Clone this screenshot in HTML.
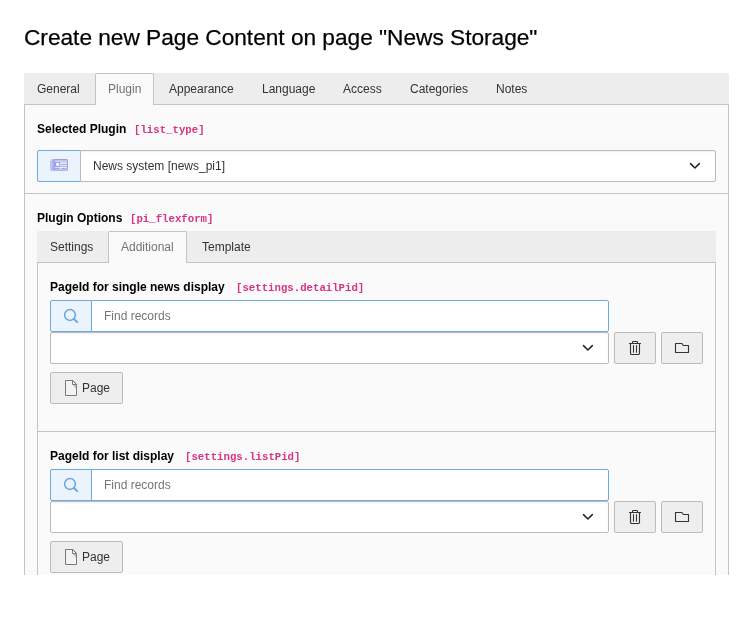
<!DOCTYPE html>
<html><head><meta charset="utf-8">
<style>
*{box-sizing:border-box;margin:0;padding:0}
html,body{width:753px;height:640px;background:#fff;overflow:hidden}
body{font-family:"Liberation Sans",sans-serif;font-size:12px;color:#333;position:relative}
div,span{position:absolute}
span.i{position:static}
h1,.tab,.lbl,.code,.txt{will-change:transform}
h1{position:absolute;left:24px;top:21.5px;font-size:22.7px;letter-spacing:-0.02px;font-weight:normal;color:#000;white-space:nowrap;line-height:30px;-webkit-text-stroke:0.25px #000}
.tabbar{background:#ededed;border-radius:2px 2px 0 0}
.tabline{height:1px;background:#c3c3c3}
.tab{top:0;height:31px;line-height:33px;color:#333;white-space:nowrap}
.tab.act{background:#fafafa;border:1px solid #c3c3c3;border-bottom:none;border-radius:2px 2px 0 0;color:#737373;height:32px;line-height:30px}
.panel{background:#fafafa;border:1px solid #c3c3c3;border-top:none;border-bottom:none}
.lbl{font-weight:bold;color:#000;white-space:nowrap;font-size:12px;line-height:14px}
.code{font-family:"Liberation Mono",monospace;color:#d63384;font-size:10.7px;font-weight:bold;white-space:nowrap;line-height:14px}
.hr{height:1px;background:#c3c3c3}
.fc{background:#fff;border:1px solid #bbb;border-radius:2px}
.sel{box-shadow:inset 0 1px 2px rgba(0,0,0,.06)}
.btn{background:#eee;border:1px solid #bbb;border-radius:2px}
.addon{background:#ebf3fc;border:1px solid #6daae0;border-radius:2px 0 0 2px}
.txt{white-space:nowrap;line-height:14px}
</style></head><body>
<h1>Create new Page Content on page "News Storage"</h1>

<!-- outer tabs -->
<div class="tabbar" style="left:24px;top:73px;width:705px;height:31px"></div>
<div class="tabline" style="left:24px;top:104px;width:705px"></div>
<div class="panel" style="left:24px;top:105px;width:705px;height:470px"></div>
<div class="tab" style="left:37px;top:73px">General</div>
<div class="tab act" style="left:95px;top:73px;width:59px;padding-left:12px">Plugin</div>
<div class="tab" style="left:169px;top:73px">Appearance</div>
<div class="tab" style="left:262px;top:73px">Language</div>
<div class="tab" style="left:343px;top:73px">Access</div>
<div class="tab" style="left:410px;top:73px">Categories</div>
<div class="tab" style="left:496px;top:73px">Notes</div>

<!-- selected plugin -->
<div class="lbl" style="left:37px;top:122px">Selected Plugin</div>
<div class="code" style="left:134px;top:123px">[list_type]</div>
<div class="addon" style="left:37px;top:150px;width:44px;height:32px"></div>
<div class="fc sel" style="left:80px;top:150px;width:636px;height:32px;border-radius:0 2px 2px 0"></div>
<svg style="position:absolute;left:47px;top:155px" width="24" height="19" viewBox="0 0 24 19">
  <path d="M3.2 6.2 L5.2 4.1 L7.6 4.1 L7.6 15.8 L4.2 15.8 Q3.2 15.8 3.2 14.8 Z" fill="#b3b7ee"/>
  <path d="M4.6 6.5 L4.6 14.5" stroke="#c7caf3" stroke-width="0.8"/>
  <rect x="7.25" y="4.75" width="13" height="10.4" rx="0.9" fill="#eef1fc" stroke="#979ce4" stroke-width="1.3"/>
  <rect x="8.6" y="7.2" width="4.2" height="4.4" fill="#f3f4fd" stroke="#979ce4" stroke-width="1.2"/>
  <rect x="14.2" y="5.8" width="4.6" height="1.9" fill="#c2c5f2"/>
  <rect x="14.2" y="9" width="4.6" height="0.9" fill="#979ce4"/>
  <rect x="14.2" y="10.9" width="4.6" height="0.9" fill="#979ce4"/>
  <rect x="14.2" y="13.1" width="4.6" height="0.9" fill="#979ce4"/>
  <rect x="8" y="13.1" width="4.9" height="0.9" fill="#979ce4"/>
</svg>
<div class="txt" style="left:93px;top:159px">News system [news_pi1]</div>
<svg style="position:absolute;left:688px;top:160px" width="14" height="10" viewBox="0 0 14 10">
  <path d="M2.5 3.6 L6.9 8 L11.3 3.6" fill="none" stroke="#222" stroke-width="1.5" stroke-linecap="round" stroke-linejoin="round"/>
</svg>
<div class="hr" style="left:25px;top:193px;width:703px"></div>

<!-- plugin options -->
<div class="lbl" style="left:37px;top:211px">Plugin Options</div>
<div class="code" style="left:129.5px;top:212px">[pi_flexform]</div>

<div class="tabbar" style="left:37px;top:231px;width:679px;height:31px"></div>
<div class="tabline" style="left:37px;top:262px;width:679px"></div>
<div class="panel" style="left:37px;top:263px;width:679px;height:320px"></div>
<div class="tab" style="left:50px;top:231px">Settings</div>
<div class="tab act" style="left:108px;top:231px;width:79px;padding-left:12px">Additional</div>
<div class="tab" style="left:202px;top:231px">Template</div>

<!-- field 1 -->
<div class="lbl" style="left:50px;top:280px">PageId for single news display</div>
<div class="code" style="left:235.5px;top:281px">[settings.detailPid]</div>
<div class="fc" style="left:91px;top:300px;width:518px;height:32px;border-color:#6daae0;border-radius:0 2px 2px 0"></div>
<div class="addon" style="left:50px;top:300px;width:42px;height:32px"></div>
<svg style="position:absolute;left:62px;top:307px" width="18" height="18" viewBox="0 0 18 18">
  <circle cx="8" cy="8" r="5.4" fill="none" stroke="#64a6de" stroke-width="1.5"/>
  <path d="M12 12 L15.2 15.2" stroke="#64a6de" stroke-width="1.9" stroke-linecap="round"/>
</svg>
<div class="txt" style="left:104px;top:309px;color:#757575">Find records</div>
<div class="fc sel" style="left:50px;top:332px;width:559px;height:32px"></div>
<svg style="position:absolute;left:581px;top:342px" width="14" height="10" viewBox="0 0 14 10">
  <path d="M2.5 3.6 L6.9 8 L11.3 3.6" fill="none" stroke="#222" stroke-width="1.5" stroke-linecap="round" stroke-linejoin="round"/>
</svg>
<div class="btn" style="left:614px;top:332px;width:42px;height:32px"></div>
<div class="btn" style="left:661px;top:332px;width:42px;height:32px"></div>
<svg style="position:absolute;left:627px;top:340px" width="16" height="16" viewBox="0 0 16 16">
  <rect x="5.5" y="1.5" width="5" height="2" rx="0.8" fill="none" stroke="#333" stroke-width="1.05"/>
  <path d="M2.5 3.5 H13.5" stroke="#333" stroke-width="1.1" stroke-linecap="round"/>
  <path d="M3.5 3.8 V13.2 Q3.5 14.5 4.8 14.5 H11.2 Q12.5 14.5 12.5 13.2 V3.8" fill="none" stroke="#333" stroke-width="1.1"/>
  <path d="M6.5 5.5 V12.2 M9.5 5.5 V12.2" stroke="#333" stroke-width="1.05" stroke-linecap="round"/>
</svg>
<svg style="position:absolute;left:673px;top:340px" width="18" height="16" viewBox="0 0 18 16">
  <path d="M2.5 3.5 H8.9 L10.3 5.5 H15.5 V12.5 H2.5 Z" fill="none" stroke="#333" stroke-width="1.1" stroke-linejoin="round"/>
</svg>
<div class="btn" style="left:50px;top:372px;width:73px;height:32px"></div>
<svg style="position:absolute;left:60px;top:376px" width="22" height="24" viewBox="0 0 22 24">
  <path d="M5.5 4.5 H12.8 L16.5 8.2 V19.5 H5.5 Z" fill="#f3f3f3" stroke="#7a7a7a" stroke-width="1"/>
  <path d="M12.5 4.5 V8.5 H16.5 Z" fill="#fff" stroke="#7a7a7a" stroke-width="1" stroke-linejoin="round"/>
  <path d="M12.8 9 H16.1 V12.9 Z" fill="#bdbdbd"/>
</svg>
<div class="txt" style="left:82px;top:381px">Page</div>

<div class="hr" style="left:38px;top:431px;width:677px"></div>

<!-- field 2 -->
<div class="lbl" style="left:50px;top:449px">PageId for list display</div>
<div class="code" style="left:184.5px;top:450px">[settings.listPid]</div>
<div class="fc" style="left:91px;top:469px;width:518px;height:32px;border-color:#6daae0;border-radius:0 2px 2px 0"></div>
<div class="addon" style="left:50px;top:469px;width:42px;height:32px"></div>
<svg style="position:absolute;left:62px;top:476px" width="18" height="18" viewBox="0 0 18 18">
  <circle cx="8" cy="8" r="5.4" fill="none" stroke="#64a6de" stroke-width="1.5"/>
  <path d="M12 12 L15.2 15.2" stroke="#64a6de" stroke-width="1.9" stroke-linecap="round"/>
</svg>
<div class="txt" style="left:104px;top:478px;color:#757575">Find records</div>
<div class="fc sel" style="left:50px;top:501px;width:559px;height:32px"></div>
<svg style="position:absolute;left:581px;top:511px" width="14" height="10" viewBox="0 0 14 10">
  <path d="M2.5 3.6 L6.9 8 L11.3 3.6" fill="none" stroke="#222" stroke-width="1.5" stroke-linecap="round" stroke-linejoin="round"/>
</svg>
<div class="btn" style="left:614px;top:501px;width:42px;height:32px"></div>
<div class="btn" style="left:661px;top:501px;width:42px;height:32px"></div>
<svg style="position:absolute;left:627px;top:509px" width="16" height="16" viewBox="0 0 16 16">
  <rect x="5.5" y="1.5" width="5" height="2" rx="0.8" fill="none" stroke="#333" stroke-width="1.05"/>
  <path d="M2.5 3.5 H13.5" stroke="#333" stroke-width="1.1" stroke-linecap="round"/>
  <path d="M3.5 3.8 V13.2 Q3.5 14.5 4.8 14.5 H11.2 Q12.5 14.5 12.5 13.2 V3.8" fill="none" stroke="#333" stroke-width="1.1"/>
  <path d="M6.5 5.5 V12.2 M9.5 5.5 V12.2" stroke="#333" stroke-width="1.05" stroke-linecap="round"/>
</svg>
<svg style="position:absolute;left:673px;top:509px" width="18" height="16" viewBox="0 0 18 16">
  <path d="M2.5 3.5 H8.9 L10.3 5.5 H15.5 V12.5 H2.5 Z" fill="none" stroke="#333" stroke-width="1.1" stroke-linejoin="round"/>
</svg>
<div class="btn" style="left:50px;top:541px;width:73px;height:32px"></div>
<svg style="position:absolute;left:60px;top:545px" width="22" height="24" viewBox="0 0 22 24">
  <path d="M5.5 4.5 H12.8 L16.5 8.2 V19.5 H5.5 Z" fill="#f3f3f3" stroke="#7a7a7a" stroke-width="1"/>
  <path d="M12.5 4.5 V8.5 H16.5 Z" fill="#fff" stroke="#7a7a7a" stroke-width="1" stroke-linejoin="round"/>
  <path d="M12.8 9 H16.1 V12.9 Z" fill="#bdbdbd"/>
</svg>
<div class="txt" style="left:82px;top:550px">Page</div>

<!-- cut -->
<div style="left:0;top:575px;width:753px;height:65px;background:#fff"></div>
</body></html>
